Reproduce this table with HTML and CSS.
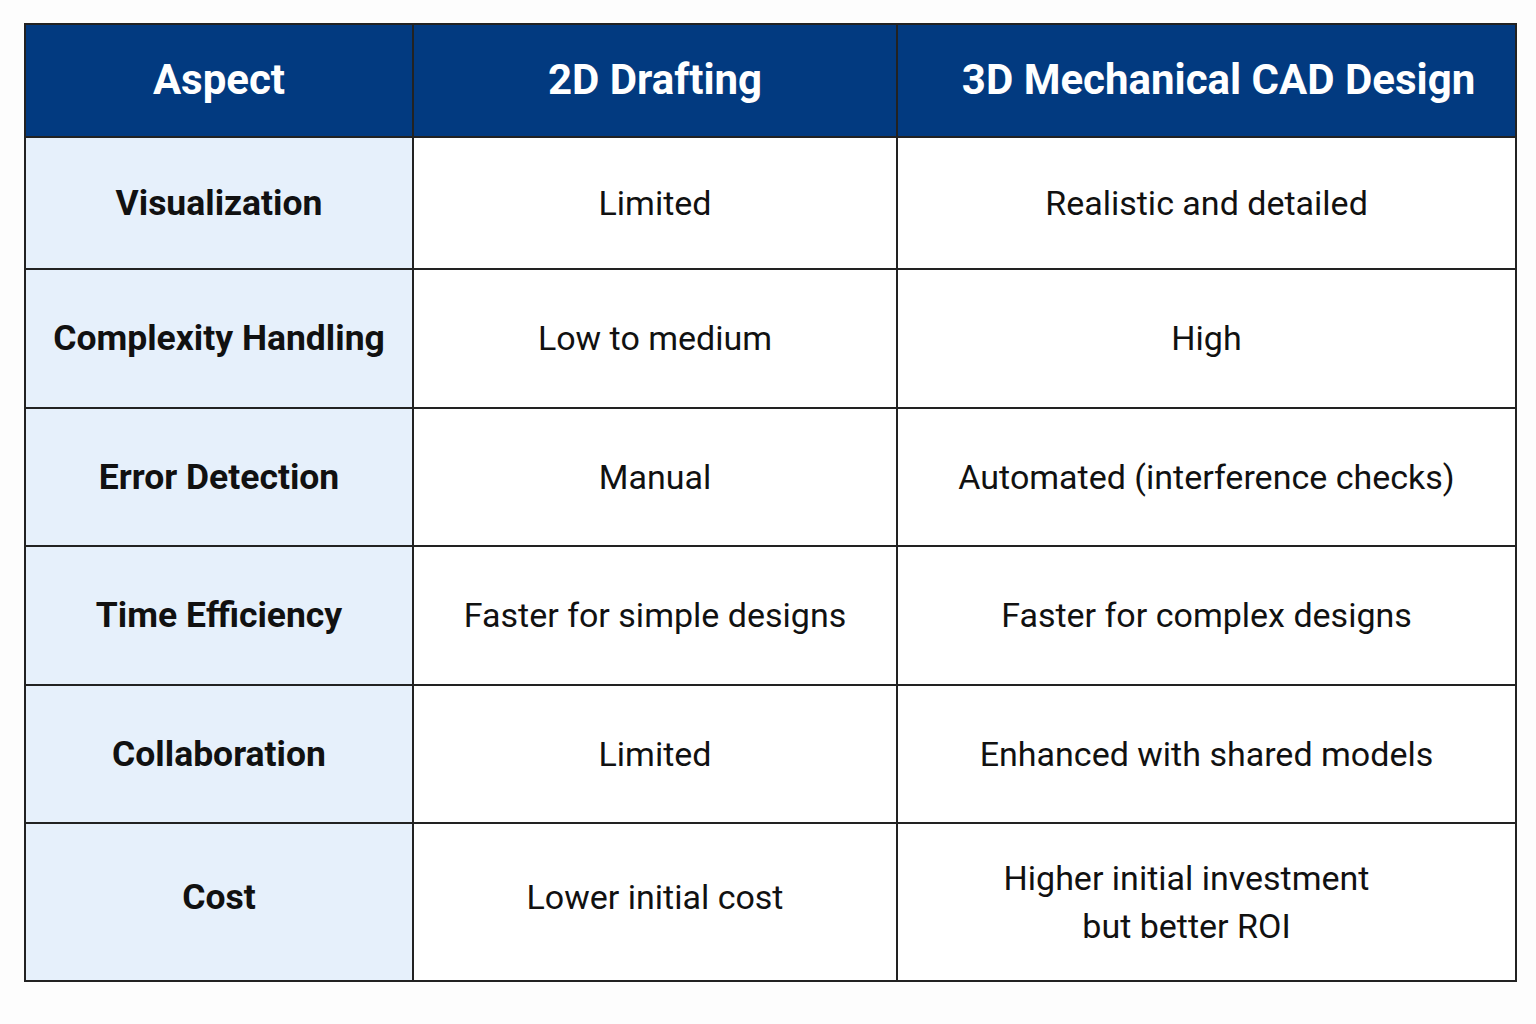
FILE: index.html
```html
<!DOCTYPE html>
<html>
<head>
<meta charset="utf-8">
<link rel="stylesheet" href="styles.css">
</head>
<body>
<table class="cmp">
  <colgroup>
    <col class="c1"><col class="c2"><col class="c3">
  </colgroup>
  <thead>
    <tr class="head"><th>Aspect</th><th>2D Drafting</th><th class="shift">3D Mechanical CAD Design</th></tr>
  </thead>
  <tbody>
    <tr class="r1"><th>Visualization</th><td>Limited</td><td>Realistic and detailed</td></tr>
    <tr class="r2"><th>Complexity Handling</th><td>Low to medium</td><td>High</td></tr>
    <tr class="r3"><th>Error Detection</th><td>Manual</td><td>Automated (interference checks)</td></tr>
    <tr class="r4"><th>Time Efficiency</th><td>Faster for simple designs</td><td>Faster for complex designs</td></tr>
    <tr class="r5"><th>Collaboration</th><td>Limited</td><td>Enhanced with shared models</td></tr>
    <tr class="r6"><th>Cost</th><td>Lower initial cost</td><td class="two">Higher initial investment<br>but better ROI</td></tr>
  </tbody>
</table>
</body>
</html>
```
FILE: styles.css
```css
html, body { margin: 0; padding: 0; background: #fdfdfd; }
body { padding: 23px 0 0 24px; font-family: Roboto, "Noto Sans", "Liberation Sans", sans-serif; color: #111; }
.cmp { border-collapse: collapse; table-layout: fixed; width: 1491px; }
.c1 { width: 388px; } .c2 { width: 484px; } .c3 { width: 619px; }
.cmp th, .cmp td { border: 2px solid #222; text-align: center; vertical-align: middle; padding: 0; line-height: 1.3; }
.head th { background: #023a80; color: #fff; font-size: 42px; font-weight: 700; height: 111px; }
.head th.shift { padding-left: 24px; }
tbody th { background: #e6f0fb; font-size: 35.5px; font-weight: 700; }
tbody td { background: #fff; font-size: 34px; font-weight: 400; }
.r1 { height: 132px; } .r2 { height: 139px; } .r3 { height: 138px; } .r4 { height: 139px; } .r5 { height: 138px; } .r6 { height: 158px; }
.r6 th, .r6 td { padding-bottom: 10px; }
.r6 td.two { line-height: 48px; padding-right: 40px; padding-bottom: 0; }
```
